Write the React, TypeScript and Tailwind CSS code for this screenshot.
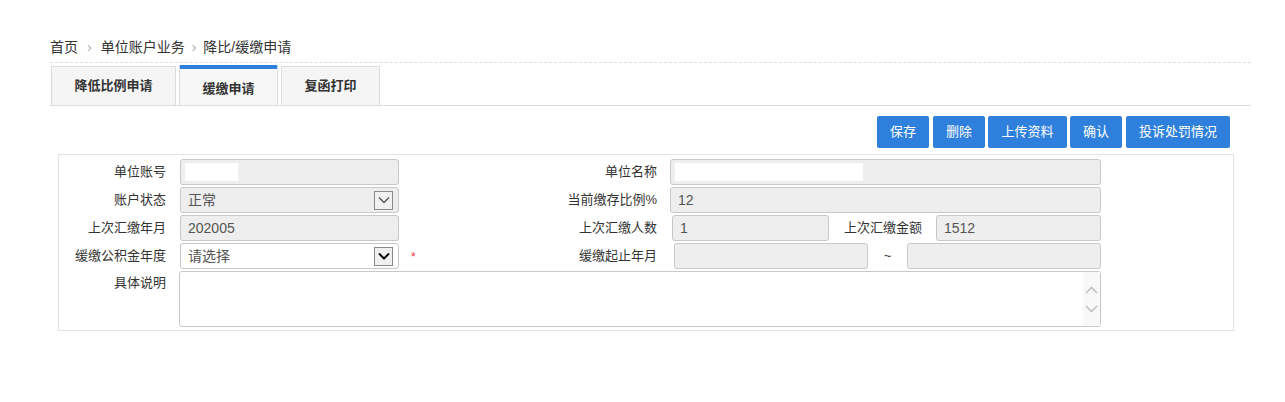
import React from "react";

const font = { fontFamily: '"Liberation Sans", "Noto Sans CJK SC", sans-serif' };

function Chevron({ dark }: { dark?: boolean }) {
  return (
    <svg width="12" height="8" viewBox="0 0 12 8">
      <path d="M1 1.5 L6 6.5 L11 1.5" fill="none" stroke={dark ? "#111" : "#556"} strokeWidth={dark ? 2 : 1.4} />
    </svg>
  );
}

function Select({ value, disabled, w }: { value: string; disabled?: boolean; w: string }) {
  return (
    <div
      className={`${w} h-[26px] flex items-center justify-between rounded-[3px] border border-[#c8c8c8] pl-[7px] pr-[5px] text-[14px] text-[#555] ${
        disabled ? "bg-[#eeeeee]" : "bg-white text-[#333]"
      }`}
    >
      <span>{value}</span>
      <div className="w-[19px] h-[19px] border border-[#8a8a8a] bg-[#f0f0f0] flex items-center justify-center">
        <Chevron dark={!disabled} />
      </div>
    </div>
  );
}

function Input({ w, value, mask }: { w: string; value?: string; mask?: string }) {
  return (
    <div className={`${w} h-[26px] flex items-center rounded-[3px] border border-[#c8c8c8] bg-[#eeeeee] pl-[7px] text-[14px] text-[#555]`}>
      {mask ? <div className={`${mask} h-[18px] bg-white -ml-[3px]`} /> : <span>{value}</span>}
    </div>
  );
}

function Label({ w, children }: { w: string; children: React.ReactNode }) {
  return <div className={`${w} text-right text-[13px] text-[#333] shrink-0`}>{children}</div>;
}

export default function App() {
  return (
    <div className="w-[1285px] h-[402px] bg-white pl-[50px] pr-[34px] pt-[37px]" style={font}>
      {/* breadcrumb */}
      <div className="h-[26px] border-b border-dashed border-[#dcdcdc] flex items-start text-[14px] text-[#333] leading-[20px]">
        <span>首页</span>
        <span className="mx-[9px] text-[#aaa]">›</span>
        <span>单位账户业务</span>
        <span className="mx-[7px] text-[#aaa]">›</span>
        <span>降比/缓缴申请</span>
      </div>
      {/* tabs */}
      <div className="mt-[3px] h-[40px] border-b border-[#dcdcdc] flex items-end gap-[3px] pl-[1px] text-[13px] font-bold text-[#333]">
        <div className="w-[125px] h-[39px] border border-b-0 border-[#d8dde2] bg-[#f5f5f5] flex items-center justify-center">
          降低比例申请
        </div>
        <div className="w-[99px] h-[40px] border-x border-[#d8dde2] bg-[#f7f7f7] border-t-[4px] border-t-[#2f7fdc] rounded-t-[2px] flex items-center justify-center pt-[3px]">
          缓缴申请
        </div>
        <div className="w-[99px] h-[39px] border border-b-0 border-[#d8dde2] bg-[#f5f5f5] flex items-center justify-center">
          复函打印
        </div>
      </div>
      {/* buttons */}
      <div className="mt-[10px] flex justify-end gap-[3px] pr-[21px] text-[13px] text-white">
        <button className="h-[32px] w-[52px] rounded-[2px] bg-[#2f7fdc]">保存</button>
        <button className="h-[32px] w-[52px] ml-[1px] rounded-[2px] bg-[#2f7fdc]">删除</button>
        <button className="h-[32px] w-[79px] rounded-[2px] bg-[#2f7fdc]">上传资料</button>
        <button className="h-[32px] w-[52px] rounded-[2px] bg-[#2f7fdc]">确认</button>
        <button className="h-[32px] w-[104px] ml-[1px] rounded-[2px] bg-[#2f7fdc]">投诉处罚情况</button>
      </div>
      {/* form */}
      <div className="mt-[6px] ml-[8px] mr-[17px] border border-[#e3e3e3] pt-[4px] pb-[3px]">
        <div className="flex items-center h-[26px] mb-[2px]">
          <Label w="w-[107px]">单位账号</Label>
          <div className="ml-[14px]"><Input w="w-[219px]" mask="w-[53px]" /></div>
          <Label w="w-[258px]">单位名称</Label>
          <div className="ml-[13px]"><Input w="w-[431px]" mask="w-[188px]" /></div>
        </div>
        <div className="flex items-center h-[26px] mb-[2px]">
          <Label w="w-[107px]">账户状态</Label>
          <div className="ml-[14px]"><Select w="w-[219px]" value="正常" disabled /></div>
          <Label w="w-[258px]">当前缴存比例%</Label>
          <div className="ml-[13px]"><Input w="w-[431px]" value="12" /></div>
        </div>
        <div className="flex items-center h-[26px] mb-[2px]">
          <Label w="w-[107px]">上次汇缴年月</Label>
          <div className="ml-[14px]"><Input w="w-[219px]" value="202005" /></div>
          <Label w="w-[258px]">上次汇缴人数</Label>
          <div className="ml-[15px]"><Input w="w-[157px]" value="1" /></div>
          <Label w="w-[93px]">上次汇缴金额</Label>
          <div className="ml-[14px]"><Input w="w-[165px]" value="1512" /></div>
        </div>
        <div className="flex items-center h-[26px] mb-[2px]">
          <Label w="w-[107px]">缓缴公积金年度</Label>
          <div className="ml-[14px]"><Select w="w-[219px]" value="请选择" /></div>
          <div className="w-[258px] flex items-center justify-between shrink-0">
            <span className="ml-[12px] text-[12px] text-[#f0303c] mt-[2px]">*</span>
            <span className="text-[13px] text-[#333]">缓缴起止年月</span>
          </div>
          <div className="ml-[17px]"><Input w="w-[194px]" /></div>
          <div className="w-[39px] text-center text-[13px] text-[#333]">~</div>
          <Input w="w-[194px]" />
        </div>
        <div className="flex items-start">
          <Label w="w-[107px]"><div className="mt-[2px]">具体说明</div></Label>
          <div className="ml-[13px] w-[922px] h-[56px] rounded-[3px] border border-[#c8c8c8] bg-white flex justify-end">
            <div className="w-[17px] h-full bg-[#f8f8f8] flex flex-col items-center justify-center gap-[11px]">
              <svg width="13" height="8" viewBox="0 0 13 8"><path d="M1 7 L6.5 1.5 L12 7" fill="none" stroke="#bbb" strokeWidth="1.4" /></svg>
              <svg width="13" height="8" viewBox="0 0 13 8"><path d="M1 1 L6.5 6.5 L12 1" fill="none" stroke="#bbb" strokeWidth="1.4" /></svg>
            </div>
          </div>
        </div>
      </div>
    </div>
  );
}
